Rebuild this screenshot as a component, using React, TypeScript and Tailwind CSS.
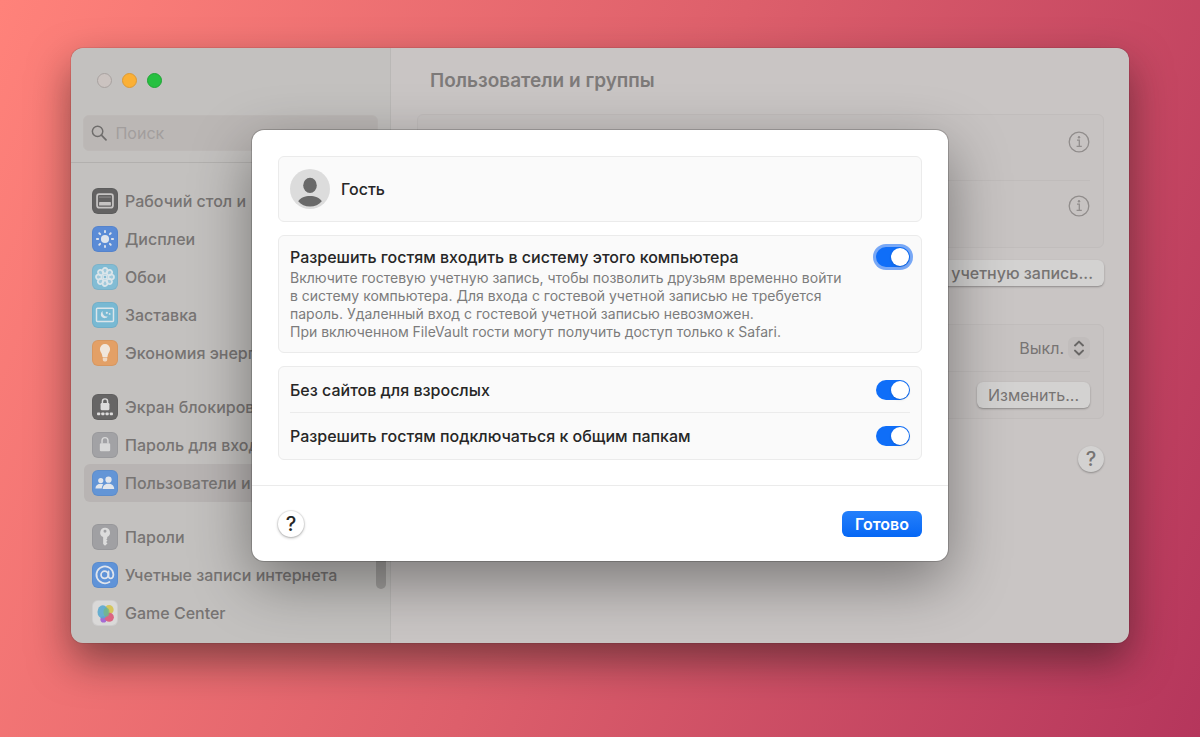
import type { ReactNode } from "react";
import clsx from "clsx";

type SidebarItem = {
    label: string;
    color: string;
    icon: ReactNode;
    selected?: boolean;
};

const PETALS = [0, 45, 90, 135, 180, 225, 270, 315];

const Padlock = () => (
    <>
        <path d="M9.8 11.500V8.200a3.200 3.200 0 0 1 6.400 0v3.300" fill="none" stroke="currentColor" strokeWidth="1.600" />
        <rect x="7.400" y="11" width="11.200" height="8.800" rx="1.400" fill="currentColor" />
    </>
);

const DockIcon = () => (
    <>
        <rect x="4.4" y="5.600" width="17.200" height="14.600" rx="2.400" fill="none" stroke="currentColor" strokeWidth="1.900" />
        <rect x="6.600" y="8" width="12.800" height="1.600" fill="currentColor" opacity="0.300" />
        <rect x="6.600" y="14" width="12.800" height="4" rx="0.800" fill="currentColor" />
    </>
);

const DisplayIcon = () => (
    <>
        <circle cx="13" cy="13" r="4.4" fill="currentColor" />
        {PETALS.map((angle) => (
            <path
                key={angle}
                d="M13 5.600V4.200"
                stroke="currentColor"
                strokeWidth="2"
                strokeLinecap="round"
                transform={`rotate(${angle} 13 13)`}
            />
        ))}
    </>
);

const WallpaperIcon = () => (
    <>
        {PETALS.map((angle) => (
            <ellipse
                key={angle}
                cx="13"
                cy="6.300"
                rx="2.700"
                ry="3.100"
                fill="currentColor"
                fillOpacity="0.350"
                stroke="currentColor"
                strokeWidth="1.800"
                transform={`rotate(${angle} 13 13)`}
            />
        ))}
        <circle cx="13" cy="13" r="2.100" fill="none" stroke="currentColor" strokeWidth="1.400" />
    </>
);

const ScreenSaverIcon = () => (
    <>
        <rect x="3.800" y="5.600" width="18.400" height="14.400" rx="1" fill="none" stroke="currentColor" strokeWidth="1.600" />
        <path d="M10.400 8.800a4.100 4.100 0 1 0 5.600 5.700 4.600 4.600 0 0 1-5.600-5.700Z" fill="currentColor" />
        <circle cx="15" cy="10.600" r="1.200" fill="currentColor" />
        <circle cx="18" cy="11.800" r="1" fill="currentColor" />
    </>
);

const BulbIcon = () => (
    <>
        <path
            d="M13 3.200a5.500 5.500 0 0 0-5.500 5.500c0 2.900 2.300 4.300 2.800 8.500h5.400c.5-4.200 2.800-5.600 2.800-8.500A5.500 5.500 0 0 0 13 3.200Z"
            fill="currentColor"
        />
        <path d="M10.600 18h4.800v2.300a1.800 1.800 0 0 1-1.800 1.800h-1.200a1.800 1.800 0 0 1-1.800-1.800Z" fill="currentColor" opacity="0.800" />
    </>
);

const LockScreenIcon = () => (
    <>
        <path d="M10.200 9.400V7a2.800 2.800 0 0 1 5.600 0v2.400" fill="none" stroke="currentColor" strokeWidth="1.600" />
        <rect x="8.200" y="8.800" width="9.600" height="7.600" rx="1.200" fill="currentColor" />
        {[4.4, 9, 13.6, 18.2].map((x) => (
            <rect key={x} x={x} y="19" width="3.400" height="3" rx="0.800" fill="currentColor" />
        ))}
    </>
);

const UsersIcon = () => (
    <>
        <circle cx="8.400" cy="10.300" r="2.800" fill="currentColor" />
        <path d="M2.600 18.900c.2-3.400 2.600-5 5.800-5 1.200 0 2 .2 2.800.7-1 1-1.600 2.500-1.700 4.300Z" fill="currentColor" />
        <circle cx="16.800" cy="9.400" r="3.400" fill="currentColor" />
        <path d="M10.400 19.400c.2-3.800 2.800-5.700 6.300-5.700s6.100 1.900 6.300 5.700Z" fill="currentColor" />
    </>
);

const KeyIcon = () => (
    <path
        fillRule="evenodd"
        d="M13 3a5.200 5.200 0 0 0-2 10v7.600l2 2 2.700-2.500-1.500-1.600 1.500-1.500-1.300-1.500 1-.9V12.900A5.200 5.200 0 0 0 13 3Zm0 2.100a1.600 1.600 0 1 1 0 3.200 1.600 1.600 0 0 1 0-3.200Z"
        fill="currentColor"
    />
);

const AtIcon = () => (
    <g fill="none" stroke="currentColor" strokeWidth="1.900" strokeLinecap="round">
        <circle cx="12.600" cy="12.800" r="3.900" />
        <path d="M16.800 9v5c0 4 5.300 3.400 5.300-1.600a9.200 9.200 0 1 0-4.300 8.200" />
    </g>
);

const GameCenterIcon = () => (
    <>
        <circle cx="17.400" cy="9.400" r="5" fill="#d5c65c" />
        <circle cx="11.400" cy="20" r="3.400" fill="#a46bd3" />
        <circle cx="17.600" cy="17.600" r="5" fill="#dc6482" />
        <ellipse cx="10.600" cy="11.800" rx="5.700" ry="7.200" fill="#5aa9cf" opacity="0.900" />
        <ellipse cx="14.600" cy="12.200" rx="3.200" ry="4.600" fill="#76b884" opacity="0.800" />
    </>
);

const SIDEBAR_GROUPS: SidebarItem[][] = [
    [
        { label: "Рабочий стол и", color: "bg-[#636262] text-[#c6c4c3]", icon: <DockIcon /> },
        { label: "Дисплеи", color: "bg-[#5a8bd6] text-[#dfe4ec]", icon: <DisplayIcon /> },
        { label: "Обои", color: "bg-[#82bcd4] text-[#dbe5ea]", icon: <WallpaperIcon /> },
        { label: "Заставка", color: "bg-[#78b9d3] text-[#dbe5ea]", icon: <ScreenSaverIcon /> },
        { label: "Экономия энергии", color: "bg-[#e3a066] text-[#f0e6dc]", icon: <BulbIcon /> },
    ],
    [
        { label: "Экран блокировки", color: "bg-[#666565] text-[#dddcdc]", icon: <LockScreenIcon /> },
        { label: "Пароль для входа", color: "bg-[#a2a2a5] text-[#d8d8d8]", icon: <Padlock /> },
        { label: "Пользователи и", color: "bg-[#6395d6] text-[#e2e6ec]", icon: <UsersIcon />, selected: true },
    ],
    [
        { label: "Пароли", color: "bg-[#a0a0a3] text-[#dcdcdc]", icon: <KeyIcon /> },
        { label: "Учетные записи интернета", color: "bg-[#5f93d8] text-[#dfe4ec]", icon: <AtIcon /> },
        { label: "Game Center", color: "bg-[#dad9d8]", icon: <GameCenterIcon /> },
    ],
];

const SidebarRow = ({ label, color, icon, selected }: SidebarItem) => (
    <a
        href="#"
        className={clsx(
            "flex h-[38px] items-center gap-[7px] rounded-md pl-2 font-medium whitespace-nowrap",
            selected && "bg-[#b8b4b3]",
        )}
    >
        <span className={clsx("size-[26px] shrink-0 rounded-md border border-black/5", color)}>
            <svg viewBox="0 0 26 26" className="size-full" aria-hidden="true">
                {icon}
            </svg>
        </span>
        {label}
    </a>
);

const Sidebar = () => (
    <aside className="relative w-[320px] shrink-0 border-r border-[#bab8b6] bg-[#c3c1bf] pb-[11px]">
        <div className="flex gap-[10px] pt-[25px] pl-[26px]">
            <button aria-label="Закрыть" className="size-[15px] rounded-full border border-[#a8a2a0] bg-[#cbc3c0]" />
            <button aria-label="Свернуть" className="size-[15px] rounded-full border border-[#dc9a35] bg-[#fbb035]" />
            <button aria-label="Развернуть" className="size-[15px] rounded-full border border-[#1fa535] bg-[#26c040]" />
        </div>
        <label className="mx-3 mt-[27px] flex h-9 items-center gap-2 rounded-md border border-[#bdb9b7] bg-[#bbb7b5] pl-[7px]">
            <svg viewBox="0 0 18 18" className="size-[18px]" fill="none" stroke="#6f6d6c" strokeWidth="1.6" aria-hidden="true">
                <circle cx="7.2" cy="7.2" r="5.7" />
                <path d="m11.4 11.4 5 5" strokeLinecap="round" strokeWidth="1.9" />
            </svg>
            <input
                type="search"
                aria-label="Поиск"
                placeholder="Поиск"
                className="w-full bg-transparent text-base outline-none placeholder:text-[#a29e9d]"
            />
        </label>
        <nav className="mt-[11px] flex flex-col gap-4 border-t border-[#b2b0ae] px-[13px] pt-[19px]">
            {SIDEBAR_GROUPS.map((group) => (
                <div key={group[0].label}>
                    {group.map((item) => (
                        <SidebarRow key={item.label} {...item} />
                    ))}
                </div>
            ))}
        </nav>
        <div className="absolute right-1 bottom-[54px] h-[340px] w-[10px] rounded-full bg-[#a19f9d]" />
    </aside>
);

const InfoButton = () => (
    <button aria-label="Сведения">
        <svg viewBox="0 0 22 22" className="size-[22px]" fill="none" stroke="#918d8c" strokeWidth="1.3" aria-hidden="true">
            <circle cx="11" cy="11" r="9.8" />
            <path d="M9 9.2h2.3v6M8.6 15.4h5.2" />
            <circle cx="11" cy="6.3" r="1.2" fill="#918d8c" stroke="none" />
        </svg>
    </button>
);

const GREY_BUTTON = "h-[26px] rounded-md bg-[#d3d2d1] px-[11px] leading-6 shadow-[0_1px_2px_rgba(0,0,0,0.3)]";
const GREY_CARD = "w-full rounded-md border border-[#c1bdbc] bg-[#c7c3c2] pr-[13px] pl-3";

const Content = () => (
    <main className="flex min-w-0 flex-1 flex-col items-end bg-[#c9c5c4] pr-[25px] pl-[26px]">
        <h1 className="mt-[21px] w-full pl-[13px] text-[19px] leading-6 font-semibold text-[#7d7a79]">
            Пользователи и группы
        </h1>
        <section className={clsx(GREY_CARD, "mt-[21px]")}>
            <div className="flex h-[66px] items-start justify-between border-b border-[#c0bcbb] pt-4">
                <span className="size-10 rounded-full bg-[#b7b4b3]" />
                <InfoButton />
            </div>
            <div className="flex h-[66px] items-start justify-end pt-[14px]">
                <InfoButton />
            </div>
        </section>
        <button className={clsx(GREY_BUTTON, "mt-3 font-medium")}>учетную запись...</button>
        <section className={clsx(GREY_CARD, "mt-[38px]")}>
            <div className="flex h-[47px] items-center justify-end border-b border-[#c0bcbb]">
                <button className="flex items-center gap-1">
                    Выкл.
                    <span className="grid size-[22px] place-items-center rounded-md bg-[#c1bdbc]">
                        <svg
                            viewBox="0 0 12 16"
                            className="h-4 w-3"
                            fill="none"
                            stroke="#686665"
                            strokeWidth="2"
                            strokeLinecap="round"
                            strokeLinejoin="round"
                            aria-hidden="true"
                        >
                            <path d="m2 5.4 4-3.8 4 3.8M2 10.6l4 3.8 4-3.8" />
                        </svg>
                    </span>
                </button>
            </div>
            <div className="flex h-[46px] items-center justify-end">
                <button className={GREY_BUTTON}>Изменить...</button>
            </div>
        </section>
        <button className="mt-[27px] size-[26px] rounded-full bg-[#d3d2d1] text-xl leading-6 font-medium shadow-[0_1px_2px_rgba(0,0,0,0.3)]">
            ?
        </button>
    </main>
);

const Switch = ({ id, focused = false }: { id: string; focused?: boolean }) => (
    <input
        id={id}
        type="checkbox"
        role="switch"
        defaultChecked
        className={clsx(
            "flex h-5 w-[34px] shrink-0 appearance-none justify-start rounded-full bg-[#d9d9d9] p-px before:size-[18px] before:rounded-full before:bg-white before:shadow-sm before:content-[''] checked:justify-end checked:bg-[#0f6ef8]",
            focused && "ring-3 ring-[#78a8f6]",
        )}
    />
);

const CARD = "rounded-md border border-[#ebebeb] bg-[#fafafa] px-[11px]";

const GuestDialog = () => (
    <div
        role="dialog"
        aria-label="Гость"
        className="w-[696px] rounded-xl bg-white text-[#262626] shadow-[0_0_0_1px_rgba(0,0,0,0.18),0_20px_60px_rgba(0,0,0,0.4)]"
    >
        <div className="flex flex-col gap-[13px] px-[26px] pt-[26px] pb-[25px]">
            <section className={clsx(CARD, "flex h-[66px] items-center gap-[11px]")}>
                <svg viewBox="0 0 40 40" className="size-10" aria-hidden="true">
                    <circle cx="20" cy="20" r="20" fill="#dcdcdc" />
                    <ellipse cx="20" cy="16.4" rx="6.8" ry="7.6" fill="#696969" />
                    <path d="M8.2 32.2C10.4 28.9 15 27 20 27s9.6 1.9 11.8 5.2C29 35.8 24.800 37.6 20 37.6S11 35.8 8.2 32.2Z" fill="#696969" />
                </svg>
                <h2 className="font-medium">Гость</h2>
            </section>
            <section className={clsx(CARD, "flex items-start justify-between pt-[9px] pb-[11px]")}>
                <div>
                    <label htmlFor="allow-guests" className="block leading-6 font-medium">
                        Разрешить гостям входить в систему этого компьютера
                    </label>
                    <p className="text-sm leading-[18px] text-[#7c7c7c]">
                        Включите гостевую учетную запись, чтобы позволить друзьям временно войти
                        <br />
                        в систему компьютера. Для входа с гостевой учетной записью не требуется
                        <br />
                        пароль. Удаленный вход с гостевой учетной записью невозможен.
                        <br />
                        При включенном FileVault гости могут получить доступ только к Safari.
                    </p>
                </div>
                <div className="pt-[2px]">
                    <Switch id="allow-guests" focused />
                </div>
            </section>
            <section className={CARD}>
                <div className="flex h-[46px] items-center justify-between border-b border-[#ebebeb]">
                    <label htmlFor="limit-adult" className="font-medium">
                        Без сайтов для взрослых
                    </label>
                    <Switch id="limit-adult" />
                </div>
                <div className="flex h-[46px] items-center justify-between">
                    <label htmlFor="shared-folders" className="font-medium">
                        Разрешить гостям подключаться к общим папкам
                    </label>
                    <Switch id="shared-folders" />
                </div>
            </section>
        </div>
        <footer className="flex h-[76px] items-center justify-between border-t border-[#ebebeb] px-[26px]">
            <button
                aria-label="Справка"
                className="size-[26px] rounded-full bg-white text-xl leading-6 font-medium shadow-[0_0_0_1px_rgba(0,0,0,0.06),0_1px_3px_rgba(0,0,0,0.3)]"
            >
                ?
            </button>
            <button className="h-[26px] rounded-md bg-linear-to-b from-[#2480fb] to-[#0567f5] px-[13px] leading-6 font-semibold text-white">
                Готово
            </button>
        </footer>
    </div>
);

export default function App() {
    return (
        <div className="min-h-screen bg-linear-[112deg] from-[#ff827a] via-[#dd5f6b] to-[#b5365c] px-[71px] pt-12 pb-[94px] font-['Inter','Liberation_Sans',sans-serif] text-base text-[#777473]">
            <div className="relative rounded-xl shadow-[0_0_1px_rgba(0,0,0,0.7),0_18px_40px_rgba(30,20,20,0.5)]">
                <div className="flex overflow-hidden rounded-xl">
                    <Sidebar />
                    <Content />
                </div>
                <div className="absolute inset-0 flex items-start justify-center overflow-hidden rounded-xl pt-[82px]">
                    <GuestDialog />
                </div>
            </div>
        </div>
    );
}
